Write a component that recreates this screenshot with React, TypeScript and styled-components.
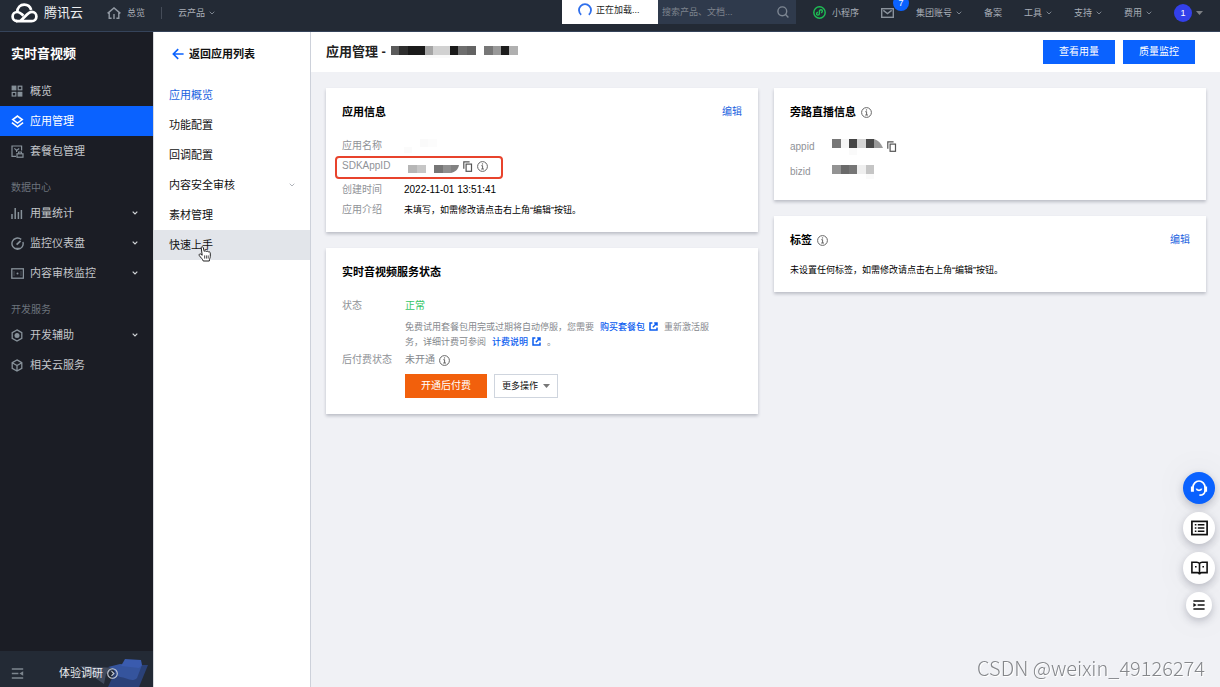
import React from "react";
import styled, { createGlobalStyle } from "styled-components";

const GlobalStyle = createGlobalStyle`
  *, *::before, *::after { box-sizing: border-box; }
  body {
    margin: 0;
    background: #f0f1f5;
    color: #000;
    font-family: "Liberation Sans", "Noto Sans CJK SC", sans-serif;
    font-size: 10px;
    line-height: 20px;
  }
  a { color: inherit; text-decoration: none; }
  button, input { font: inherit; margin: 0; border: 0; border-radius: 0; }
  button { cursor: pointer; }
  svg { display: block; flex: none; }
  h1, h2, p, ul, dl, dd, dt { margin: 0; padding: 0; }
`;

/* ---------- layout ---------- */

const Page = styled.div`
  display: flex;
  flex-direction: column;
  min-height: 100vh;
`;

const Body = styled.div`
  display: flex;
  flex: 1;
`;

/* ---------- top bar ---------- */

const TopBar = styled.header`
  display: flex;
  align-items: flex-start;
  height: 32px;
  padding: 0 17px 0 11px;
  background: #232a35;
  border-bottom: 1px solid #35435a;
  color: #a9afb8;
  font-size: 9px;
`;

const TopGroup = styled.nav<{ $gap: number }>`
  display: flex;
  align-items: center;
  gap: ${(p) => p.$gap}px;
  height: 25px;
  white-space: nowrap;
`;

const Brand = styled.a`
  display: flex;
  align-items: center;
  gap: 6px;
  margin-right: 8px;
  color: #eceef0;
  font-size: 13px;
`;

const TopLink = styled.a<{ $gap?: number }>`
  position: relative;
  display: flex;
  align-items: center;
  gap: ${(p) => p.$gap ?? 4}px;
`;

const Divider = styled.span`
  width: 1px;
  height: 12px;
  background: #454c58;
`;

const Badge = styled.span`
  position: absolute;
  left: 12px;
  top: -13px;
  width: 16px;
  height: 16px;
  border-radius: 8px;
  background: #0a62ff;
  color: #fff;
  line-height: 16px;
  text-align: center;
`;

const Avatar = styled.span`
  width: 18px;
  height: 18px;
  border-radius: 9px;
  background: #3340ea;
  color: #fff;
  line-height: 18px;
  text-align: center;
`;

const Loading = styled.div`
  display: flex;
  align-items: center;
  gap: 4px;
  width: 96px;
  height: 24px;
  margin-left: auto;
  padding: 0 0 4px 16px;
  background: #fff;
  color: #222;
`;

const Search = styled.label`
  display: flex;
  align-items: center;
  width: 138px;
  height: 24px;
  margin-right: 17px;
  padding: 0 7px 0 4px;
  background: #2f3a4c;
`;

const SearchInput = styled.input`
  flex: 1;
  min-width: 0;
  padding: 0;
  background: none;
  color: #d0d4da;
  outline: none;
  &::placeholder { color: #7d838c; opacity: 1; }
`;

/* ---------- product side bar ---------- */

const SideBar = styled.aside`
  display: flex;
  flex: none;
  flex-direction: column;
  width: 153px;
  background: #1b1d25;
  color: #c3c6ca;
`;

const SideTitle = styled.h2`
  padding: 12px 11px;
  color: #fff;
  font-size: 13px;
  line-height: 20px;
`;

const SideLabel = styled.p`
  padding: 12px 11px 0;
  color: #6c737c;
`;

const SideLink = styled.a<{ $active?: boolean }>`
  display: flex;
  align-items: center;
  gap: 6px;
  height: 30px;
  padding: 0 15px 0 11px;
  background: ${(p) => (p.$active ? "#0a62ff" : "transparent")};
  color: ${(p) => (p.$active ? "#fff" : "inherit")};
  font-size: 11px;
`;

const Grow = styled.span`
  flex: 1;
`;

const SideFooter = styled.footer`
  position: relative;
  display: flex;
  align-items: center;
  gap: 35px;
  height: 36px;
  margin-top: auto;
  padding: 8px 11px 0;
  background: #232a35;
  overflow: hidden;
`;

const Survey = styled.a`
  position: relative;
  display: flex;
  align-items: center;
  gap: 4px;
  color: #e8eaed;
  font-size: 11px;
`;

const SurveyArt = styled.svg`
  position: absolute;
  right: 3px;
  bottom: 0;
`;

/* ---------- application menu ---------- */

const AppMenu = styled.nav`
  flex: none;
  width: 158px;
  background: #fff;
  border-left: 1px solid #d8dade;
  border-right: 1px solid #cdd1da;
  font-size: 11px;
`;

const BackLink = styled.a`
  display: flex;
  align-items: center;
  gap: 5px;
  padding: 12px 18px 16px;
  color: #111;
  font-weight: 700;
`;

const AppMenuLink = styled.a<{ $state?: "active" | "hover" }>`
  position: relative;
  display: flex;
  align-items: center;
  justify-content: space-between;
  height: 30px;
  padding: 0 15px;
  background: ${(p) => (p.$state === "hover" ? "#e2e5ea" : "transparent")};
  color: ${(p) => (p.$state === "active" ? "#1a62e0" : "#111")};
`;

const Pointer = styled.svg`
  position: absolute;
  left: 44px;
  top: 16px;
`;

/* ---------- main ---------- */

const Main = styled.main`
  flex: 1;
  min-width: 0;
`;

const PageHead = styled.div`
  display: flex;
  align-items: center;
  gap: 8px;
  height: 40px;
  padding: 0 25px 0 15px;
  background: #fff;
`;

const PageTitle = styled.h1`
  display: flex;
  align-items: center;
  gap: 5px;
  margin-right: auto;
  font-size: 13px;
  font-weight: 700;
  color: #222;
`;

const Button = styled.button<{ $kind: "primary" | "warn" | "plain" }>`
  display: flex;
  align-items: center;
  justify-content: center;
  gap: 5px;
  height: 24px;
  padding: 0 ${(p) => (p.$kind === "plain" ? 7 : 16)}px;
  border: ${(p) => (p.$kind === "plain" ? "1px solid #cfd5de" : "0")};
  background: ${(p) =>
    ({ primary: "#0a62ff", warn: "#f2600c", plain: "#fff" })[p.$kind]};
  color: ${(p) => (p.$kind === "plain" ? "#111" : "#fff")};
  font-size: ${(p) => (p.$kind === "plain" ? 9 : 10)}px;
  white-space: nowrap;
`;

const Columns = styled.div`
  display: grid;
  grid-template-columns: 1fr 1fr;
  align-items: start;
  gap: 16px;
  padding: 16px 14px 16px 15px;
`;

const Stack = styled.div`
  display: flex;
  flex-direction: column;
  gap: 16px;
`;

const Card = styled.section<{ $bottom: number }>`
  padding: 16px 16px ${(p) => p.$bottom}px;
  background: #fff;
  box-shadow: 0 2px 3px rgba(54, 58, 80, 0.28);
`;

const CardHead = styled.div<{ $gap: number }>`
  display: flex;
  align-items: center;
  gap: 5px;
  height: 16px;
  margin-bottom: ${(p) => p.$gap}px;
`;

const CardTitle = styled.h2`
  font-size: 11px;
  font-weight: 700;
`;

const EditLink = styled.a`
  margin-left: auto;
  color: #1a62e0;
`;

const Row = styled.div<{ $label: number; $height?: number; $after?: number }>`
  position: relative;
  display: grid;
  grid-template-columns: ${(p) => p.$label}px 1fr;
  align-items: center;
  min-height: ${(p) => p.$height ?? 20}px;
  margin-bottom: ${(p) => p.$after ?? 0}px;
`;

const Term = styled.dt`
  color: #8f9297;
`;

const Value = styled.dd<{ $tone?: "ok" | "muted" }>`
  display: flex;
  align-items: center;
  gap: 4px;
  color: ${(p) =>
    p.$tone === "ok" ? "#35c566" : p.$tone === "muted" ? "#85888d" : "#000"};
`;

const Sentence = styled.span`
  font-size: 9px;
`;

const Note = styled.dd`
  grid-column: 2;
  padding-right: 20px;
  color: #85888d;
  font-size: 9px;
  line-height: 15px;
`;

const NoteLink = styled.a`
  margin: 0 6px;
  color: #0a5cf0;
  font-weight: 500;
  svg {
    display: inline-block;
    margin-left: 4px;
    vertical-align: -1px;
  }
`;

const Highlight = styled.span`
  position: absolute;
  top: 0;
  bottom: -3px;
  left: -7px;
  width: 168px;
  border: 2px solid #e8432c;
  border-radius: 4px;
`;

const Actions = styled.div`
  display: flex;
  gap: 7px;
  margin: 4px 0 0 63px;
`;

/* ---------- floating tools ---------- */

const FloatTools = styled.div`
  position: fixed;
  right: 5px;
  bottom: 69px;
  display: flex;
  flex-direction: column;
  align-items: center;
  gap: 8px;
`;

const RoundButton = styled.button<{ $size: number; $primary?: boolean }>`
  display: flex;
  align-items: center;
  justify-content: center;
  width: ${(p) => p.$size}px;
  height: ${(p) => p.$size}px;
  padding: 0;
  border-radius: 50%;
  background: ${(p) => (p.$primary ? "#0a62ff" : "#fff")};
  box-shadow: 0 3px 8px rgba(54, 58, 80, 0.28), 0 0 36px rgba(54, 58, 80, 0.07);
`;

const Watermark = styled.p`
  position: fixed;
  right: 15px;
  bottom: 7px;
  color: #85878b;
  font-family: "Noto Sans CJK SC", sans-serif;
  font-size: 20px;
  font-weight: 300;
  line-height: 24px;
  text-shadow: 1px 1px 0 #fff;
`;

/* ---------- icons ---------- */

const stroke = (color: string, width = 1) => ({
  fill: "none",
  stroke: color,
  strokeWidth: width,
});

const CloudLogo = () => (
  <svg width="27" height="20" viewBox="0 0 27 20" {...stroke("#fff", 2.7)}>
    <path d="M5 18.1H20.5C23.6 18.1 25.4 16 25.4 13.4C25.4 10.8 23.4 8.9 20.9 8.9C18.9 8.9 17.6 9.9 16.3 11.2L9.4 18" />
    <path d="M6.3 18.1C3.5 18.1 1.6 16.1 1.6 13.5C1.6 10.9 3.7 9 6.2 9C8.2 9 9.6 10.1 10.9 11.3L12.4 12.8" />
    <path d="M6.2 9C6.4 4.6 9.3 1.6 13.2 1.6C16.7 1.6 19.2 3.7 20.2 7" />
  </svg>
);

const HomeIcon = () => (
  <svg width="14" height="12" viewBox="0 0 14 12" {...stroke("#9299a3", 1.4)}>
    <path d="M0.6 6.4L7 0.9L13.4 6.4M2.2 5V11.3H4.6M11.8 5V11.3H9.4M7 7V11.9" />
  </svg>
);

const Chevron = ({ color = "#7b838e", width = 1 }: { color?: string; width?: number }) => (
  <svg width="6" height="4" viewBox="0 0 6 4" {...stroke(color, width)}>
    <path d="M0.7 0.7L3 3L5.3 0.7" />
  </svg>
);

const Caret = ({ color = "#777" }: { color?: string }) => (
  <svg width="7" height="4" viewBox="0 0 7 4" fill={color}>
    <path d="M0 0H7L3.5 4Z" />
  </svg>
);

const Spinner = () => (
  <svg width="14" height="14" viewBox="0 0 14 14" {...stroke("#2f6fec", 1.8)}>
    <path d="M3.2 11.8A6 6 0 1 1 10.8 11.8" />
  </svg>
);

const SearchIcon = () => (
  <svg width="12" height="12" viewBox="0 0 12 12" {...stroke("#7e8793", 1.4)}>
    <circle cx="5.3" cy="5.3" r="4.4" />
    <path d="M8.6 8.6L11.4 11.4" />
  </svg>
);

const MiniProgramIcon = () => (
  <svg width="13" height="13" viewBox="0 0 13 13" {...stroke("#1fbf55", 1.4)}>
    <circle cx="6.5" cy="6.5" r="5.7" />
    <path d="M4.9 6.2C3.2 6.4 3.1 9.1 4.8 9.1C6 9.1 6.4 8.3 6.4 7.4V5.4C6.4 4.4 7 3.8 8 3.8C9.8 3.8 9.8 6.4 8.1 6.7" />
  </svg>
);

const MailIcon = () => (
  <svg width="13" height="10" viewBox="0 0 13 10" {...stroke("#8a929c", 1.4)}>
    <rect x="0.7" y="0.7" width="11.6" height="8.6" />
    <path d="M2.3 2.4L6.5 5.6L10.7 2.4" />
  </svg>
);

const ICON = "#87919a";

const GridIcon = () => (
  <svg width="13" height="13" viewBox="0 0 13 13" {...stroke(ICON, 1.2)}>
    <rect x="1.2" y="1.2" width="3.6" height="3.6" fill={ICON} />
    <rect x="7.2" y="1.2" width="3.6" height="3.6" />
    <rect x="1.2" y="7.4" width="3.6" height="3.6" />
    <rect x="7.2" y="7.4" width="3.6" height="3.6" fill={ICON} />
  </svg>
);

const LayersIcon = () => (
  <svg width="13" height="13" viewBox="0 0 13 13" {...stroke("#fff", 1.6)}>
    <path d="M6.5 1.1L11.2 4.6L6.5 8.1L1.8 4.6Z" />
    <path d="M0.9 7.6L6.5 11.8L12.1 7.6" />
  </svg>
);

const PackageIcon = () => (
  <svg width="13" height="13" viewBox="0 0 13 13" {...stroke(ICON, 1.2)}>
    <path d="M5 11.4H1V1H10.6V5.6M3.4 3.4L5.6 5.4L8.2 3.4M5.6 5.4V7" />
    <rect x="6" y="8.8" width="6" height="3.4" />
    <path d="M7.6 8.8V7H10.4V8.8" />
  </svg>
);

const BarsIcon = () => (
  <svg width="13" height="13" viewBox="0 0 13 13" {...stroke(ICON, 1.5)}>
    <path d="M1 7V12M4.2 1V12M7.4 5V12M10.4 3V12" />
  </svg>
);

const GaugeIcon = () => (
  <svg width="13" height="13" viewBox="0 0 13 13" {...stroke(ICON, 1.4)}>
    <path d="M10.2 2.4A5.6 5.6 0 1 0 11.9 5M4 11.4H9" />
    <path d="M5.6 7.6L9.6 3.8" strokeWidth="1.8" />
  </svg>
);

const MonitorIcon = () => (
  <svg width="13" height="13" viewBox="0 0 13 13" {...stroke(ICON, 1.3)}>
    <rect x="0.8" y="1.8" width="11.6" height="9.4" />
    <path d="M3 4V9M10 4V9" strokeWidth="0.4" />
    <circle cx="6.5" cy="6.5" r="1" fill={ICON} stroke="none" />
  </svg>
);

const HexIcon = () => (
  <svg width="13" height="13" viewBox="0 0 13 13" {...stroke(ICON, 1.3)}>
    <path d="M6 0.9L10.8 3.6V9.4L6 12.1L1.2 9.4V3.6Z" />
    <circle cx="6" cy="6.5" r="2.5" fill={ICON} stroke="none" />
  </svg>
);

const CubeIcon = () => (
  <svg width="13" height="13" viewBox="0 0 13 13" {...stroke(ICON, 1.3)}>
    <path d="M6 0.9L10.8 3.6V9.4L6 12.1L1.2 9.4V3.6ZM1.2 3.8L6 6.6L10.8 3.8M6 6.6V12" />
  </svg>
);

const CollapseIcon = () => (
  <svg width="13" height="11" viewBox="0 0 13 11" {...stroke("#7d868f", 1.3)}>
    <path d="M0.8 1H12.2M0.8 5.5H7.4M0.8 10H12.2" />
    <path d="M12.2 3.2V7.8L8.4 5.5Z" fill="#7d868f" stroke="none" />
  </svg>
);

const CircleArrow = () => (
  <svg width="11" height="11" viewBox="0 0 11 11" {...stroke("#c9ced6", 1.1)}>
    <circle cx="5.5" cy="5.5" r="4.8" />
    <path d="M4.5 3.2L6.9 5.5L4.5 7.8" />
  </svg>
);

const BackIcon = () => (
  <svg width="12" height="12" viewBox="0 0 12 12" {...stroke("#0a62ff", 1.6)}>
    <path d="M11.6 6H1.4M6.2 1.1L1.3 6L6.2 10.9" />
  </svg>
);

const CopyIcon = () => (
  <svg width="10" height="11" viewBox="0 0 10 11" {...stroke("#555", 1.2)}>
    <rect x="3.1" y="3.1" width="5.4" height="7.2" />
    <path d="M0.8 7.8V0.8H6.6" />
  </svg>
);

const InfoIcon = () => (
  <svg width="11" height="11" viewBox="0 0 11 11" {...stroke("#666", 1)}>
    <circle cx="5.5" cy="5.5" r="4.9" />
    <path d="M5.6 4.6V8M4.3 4.7H5.6M4.2 8H7" />
    <circle cx="5.5" cy="2.9" r="0.7" fill="#666" stroke="none" />
  </svg>
);

const ExternalIcon = () => (
  <svg width="9" height="9" viewBox="0 0 9 9" {...stroke("#0a5cf0", 1.5)}>
    <path d="M3.4 1H1V8H8V5.6M5.2 1H8V3.8M7.8 1.2L3.8 5.2" />
  </svg>
);

const HeadsetIcon = () => (
  <svg width="18" height="18" viewBox="0 0 18 18" {...stroke("#fff", 1.7)}>
    <path d="M3 8.4A6 6.4 0 0 1 15 8.4M15 12C14.8 14.6 12.8 16.2 9.4 16.2" />
    <path d="M2.4 7.6V12.8M15.6 7.6V12.8" strokeWidth="3" />
    <path d="M6.4 9.6C7 12 11 12 11.6 9.6" />
  </svg>
);

const ListIcon = () => (
  <svg width="17" height="16" viewBox="0 0 17 16" {...stroke("#111", 1.7)}>
    <rect x="0.9" y="1.4" width="15.2" height="13.2" />
    <path d="M3.8 4.8H5.4M6.8 4.8H13.4M3.8 8H5.4M6.8 8H13.4M3.8 11.2H5.4M6.8 11.2H13.4" strokeWidth="1.4" />
  </svg>
);

const BookIcon = () => (
  <svg width="17" height="14" viewBox="0 0 17 14" {...stroke("#111", 1.6)}>
    <path d="M8.5 2.6C7.8 1.6 7 1.3 5.8 1.3H0.9V11.6H6.4C7.6 11.6 8.2 12 8.5 13.2C8.8 12 9.4 11.6 10.6 11.6H16.1V1.3H11.2C10 1.3 9.2 1.6 8.5 2.6ZM8.5 2.6V13" />
    <path d="M4 5.8H5.6M11.4 5.8H13" />
  </svg>
);

const ExpandIcon = () => (
  <svg width="12" height="10" viewBox="0 0 12 10" {...stroke("#111", 1.3)}>
    <path d="M0.4 1H11.6M4.6 5H11.6M0.4 9H11.6" />
    <path d="M0.4 2.9V7.1L3.6 5Z" fill="#111" stroke="none" />
  </svg>
);

const ClipboardArt = () => (
  <SurveyArt width="70" height="30" viewBox="0 0 70 30" aria-hidden="true">
    <path d="M0 9L36 11L26 17L24 27L8 16Z" fill="#414b5d" />
    <path d="M38 8L68 8L59 30H28Z" fill="#2a4178" />
    <path d="M28 10L40 7L62 8L57 21C52 26 46 20 40 20C35 18 36 12 28 10Z" fill="#35549d" />
    <path d="M45 2L61 3L62 8L59 11L41 9Z" fill="#3a5bae" />
  </SurveyArt>
);

const HandPointer = () => (
  <Pointer width="14" height="16" viewBox="0 0 14 16" aria-hidden="true">
    <path
      d="M3.2 1.6C3.2 0.4 5 0.4 5.3 1.6L6.2 5.4C6.6 4.6 8 4.7 8.3 5.6C8.9 4.9 10.1 5.1 10.3 6C11.2 5.5 12.3 6 12.3 7.2V10.4C12.3 12 11.4 12.6 11.3 15H5.2C4.9 13.2 2.6 11.6 1.2 9.4C0.7 8.3 2 7.4 3 8.2L4.2 9.3Z"
      fill="#fff"
      stroke="#222"
      strokeWidth="1"
    />
    <path d="M6.6 9.4V12.6M8.4 9.4V12.6M10.2 9.4V12.6" {...stroke("#222", 0.8)} />
  </Pointer>
);

/* Pixelated blocks that hide private values. */
type Cell = [x: number, y: number, w: number, h: number, fill: string];

const Mosaic = ({ width, height, cells, tail }: { width: number; height: number; cells: Cell[]; tail?: React.ReactNode }) => (
  <svg width={width} height={height} viewBox={`0 0 ${width} ${height}`} shapeRendering="crispEdges" aria-hidden="true">
    {cells.map(([x, y, w, h, fill]) => (
      <rect key={`${x}-${y}`} x={x} y={y} width={w} height={h} fill={fill} />
    ))}
    {tail}
  </svg>
);

const titleCells: Cell[] = [
  [0, 0, 8, 9, "#5b5b5b"], [8, 0, 9, 9, "#2e2e2e"], [17, 0, 17, 9, "#1a1a1a"],
  [34, 0, 8, 9, "#a5a5a5"], [42, 0, 17, 9, "#d1d1d1"], [59, 0, 8, 9, "#1a1a1a"],
  [67, 0, 9, 9, "#6e6e6e"], [76, 0, 9, 9, "#636363"], [93, 0, 9, 9, "#777"],
  [102, 0, 8, 9, "#999"], [110, 0, 8, 9, "#1c1c1c"], [118, 0, 9, 9, "#b0b0b0"],
  [34, 9, 25, 3, "#fafafa"],
];
const nameCells: Cell[] = [
  [0, 8, 8, 6, "#fbfbfb"], [16, 0, 8, 8, "#fafafa"], [24, 0, 9, 8, "#fcfcfc"],
];
const sdkCells: Cell[] = [
  [0, 6, 9, 8, "#b6b6b6"], [9, 6, 9, 8, "#c6c6c6"], [26, 6, 9, 8, "#767676"], [35, 6, 8, 8, "#8f8f8f"],
];
const appidCells: Cell[] = [
  [0, 0, 9, 9, "#777"], [9, 0, 8, 9, "#f5f5f5"], [17, 0, 8, 9, "#444"],
  [25, 0, 9, 9, "#d4d4d4"], [34, 0, 8, 9, "#484848"], [17, 9, 8, 7, "#fafafa"],
];
const bizidCells: Cell[] = [
  [0, 0, 9, 9, "#939393"], [9, 0, 8, 9, "#6a6a6a"], [17, 0, 8, 9, "#767676"],
  [25, 0, 9, 9, "#efefef"], [34, 0, 8, 9, "#c5c5c5"], [34, 9, 8, 5, "#fafafa"],
];

/* ---------- data ---------- */

type SideEntry = { text: string; icon: React.ReactNode; active?: boolean; fold?: boolean };

const sideGroups: { label?: string; items: SideEntry[] }[] = [
  {
    items: [
      { text: "概览", icon: <GridIcon /> },
      { text: "应用管理", icon: <LayersIcon />, active: true },
      { text: "套餐包管理", icon: <PackageIcon /> },
    ],
  },
  {
    label: "数据中心",
    items: [
      { text: "用量统计", icon: <BarsIcon />, fold: true },
      { text: "监控仪表盘", icon: <GaugeIcon />, fold: true },
      { text: "内容审核监控", icon: <MonitorIcon />, fold: true },
    ],
  },
  {
    label: "开发服务",
    items: [
      { text: "开发辅助", icon: <HexIcon />, fold: true },
      { text: "相关云服务", icon: <CubeIcon /> },
    ],
  },
];

const appMenu: { text: string; state?: "active" | "hover"; fold?: boolean }[] = [
  { text: "应用概览", state: "active" },
  { text: "功能配置" },
  { text: "回调配置" },
  { text: "内容安全审核", fold: true },
  { text: "素材管理" },
  { text: "快速上手", state: "hover" },
];

const topMenu = [
  { text: "集团账号", fold: true },
  { text: "备案", fold: false },
  { text: "工具", fold: true },
  { text: "支持", fold: true },
  { text: "费用", fold: true },
];

/* ---------- page ---------- */

export default function App() {
  return (
    <Page>
      <GlobalStyle />
      <TopBar>
        <TopGroup $gap={16}>
          <Brand href="#home">
            <CloudLogo />
            腾讯云
          </Brand>
          <TopLink href="#overview" $gap={6}>
            <HomeIcon />
            总览
          </TopLink>
          <Divider />
          <TopLink href="#products" $gap={4}>
            云产品
            <Chevron />
          </TopLink>
        </TopGroup>
        <Loading role="status">
          <Spinner />
          正在加载...
        </Loading>
        <Search>
          <SearchInput type="text" placeholder="搜索产品、文档..." aria-label="搜索产品、文档" />
          <SearchIcon />
        </Search>
        <TopGroup $gap={22}>
          <TopLink href="#mini" $gap={6}>
            <MiniProgramIcon />
            小程序
          </TopLink>
          <TopLink href="#mail" aria-label="消息">
            <MailIcon />
            <Badge>7</Badge>
          </TopLink>
          {topMenu.map((m) => (
            <TopLink key={m.text} href="#menu">
              {m.text}
              {m.fold && <Chevron />}
            </TopLink>
          ))}
          <TopLink href="#account">
            <Avatar>1</Avatar>
            <Caret color="#7d8085" />
          </TopLink>
        </TopGroup>
      </TopBar>

      <Body>
        <SideBar>
          <SideTitle>实时音视频</SideTitle>
          {sideGroups.map((g, i) => (
            <div key={i}>
              {g.label && <SideLabel>{g.label}</SideLabel>}
              {g.items.map((it) => (
                <SideLink key={it.text} href="#section" $active={it.active}>
                  {it.icon}
                  {it.text}
                  <Grow />
                  {it.fold && <Chevron color="#d0d3d6" width={1.2} />}
                </SideLink>
              ))}
            </div>
          ))}
          <SideFooter>
            <ClipboardArt />
            <CollapseIcon />
            <Survey href="#survey">
              体验调研
              <CircleArrow />
            </Survey>
          </SideFooter>
        </SideBar>

        <AppMenu>
          <BackLink href="#apps">
            <BackIcon />
            返回应用列表
          </BackLink>
          {appMenu.map((it) => (
            <AppMenuLink key={it.text} href="#page" $state={it.state}>
              {it.text}
              {it.fold && <Chevron color="#b0b4ba" />}
              {it.state === "hover" && <HandPointer />}
            </AppMenuLink>
          ))}
        </AppMenu>

        <Main>
          <PageHead>
            <PageTitle>
              应用管理 -
              <Mosaic width={130} height={12} cells={titleCells} />
            </PageTitle>
            <Button $kind="primary">查看用量</Button>
            <Button $kind="primary">质量监控</Button>
          </PageHead>

          <Columns>
            <Stack>
              <Card $bottom={12}>
                <CardHead $gap={16}>
                  <CardTitle>应用信息</CardTitle>
                  <EditLink href="#edit-app">编辑</EditLink>
                </CardHead>
                <dl>
                  <Row $label={62}>
                    <Term>应用名称</Term>
                    <Value>
                      <Mosaic width={40} height={14} cells={nameCells} />
                    </Value>
                  </Row>
                  <Row $label={66} $after={4}>
                    <Term>SDKAppID</Term>
                    <Value>
                      <Mosaic
                        width={51}
                        height={14}
                        cells={sdkCells}
                        tail={<path d="M43 6H51C50 11 47 13 43 14Z" fill="#828282" shapeRendering="auto" />}
                      />
                      <CopyIcon />
                      <InfoIcon />
                    </Value>
                    <Highlight />
                  </Row>
                  <Row $label={62}>
                    <Term>创建时间</Term>
                    <Value>2022-11-01 13:51:41</Value>
                  </Row>
                  <Row $label={62}>
                    <Term>应用介绍</Term>
                    <Value>
                      <Sentence>未填写，如需修改请点击右上角“编辑”按钮。</Sentence>
                    </Value>
                  </Row>
                </dl>
              </Card>

              <Card $bottom={16}>
                <CardHead $gap={16}>
                  <CardTitle>实时音视频服务状态</CardTitle>
                </CardHead>
                <dl>
                  <Row $label={63} $after={4}>
                    <Term>状态</Term>
                    <Value $tone="ok">正常</Value>
                  </Row>
                  <Row $label={63}>
                    <Note>
                      免费试用套餐包用完或过期将自动停服，您需要
                      <NoteLink href="#buy">
                        购买套餐包
                        <ExternalIcon />
                      </NoteLink>
                      重新激活服务，详细计费可参阅
                      <NoteLink href="#pricing">
                        计费说明
                        <ExternalIcon />
                      </NoteLink>
                      。
                    </Note>
                  </Row>
                  <Row $label={63}>
                    <Term>后付费状态</Term>
                    <Value $tone="muted">
                      未开通
                      <InfoIcon />
                    </Value>
                  </Row>
                </dl>
                <Actions>
                  <Button $kind="warn">开通后付费</Button>
                  <Button $kind="plain" aria-haspopup="menu">
                    更多操作
                    <Caret />
                  </Button>
                </Actions>
              </Card>
            </Stack>

            <Stack>
              <Card $bottom={16}>
                <CardHead $gap={14}>
                  <CardTitle>旁路直播信息</CardTitle>
                  <InfoIcon />
                </CardHead>
                <dl>
                  <Row $label={42} $height={25}>
                    <Term>appid</Term>
                    <Value>
                      <Mosaic
                        width={51}
                        height={16}
                        cells={appidCells}
                        tail={<path d="M42 0C46 1 49 4 51 9H42Z" fill="#999" shapeRendering="auto" />}
                      />
                      <CopyIcon />
                    </Value>
                  </Row>
                  <Row $label={42} $height={25}>
                    <Term>bizid</Term>
                    <Value>
                      <Mosaic width={51} height={14} cells={bizidCells} />
                    </Value>
                  </Row>
                </dl>
              </Card>

              <Card $bottom={12}>
                <CardHead $gap={12}>
                  <CardTitle>标签</CardTitle>
                  <InfoIcon />
                  <EditLink href="#edit-tags">编辑</EditLink>
                </CardHead>
                <p>
                  <Sentence>未设置任何标签，如需修改请点击右上角“编辑”按钮。</Sentence>
                </p>
              </Card>
            </Stack>
          </Columns>
        </Main>
      </Body>

      <FloatTools>
        <RoundButton $size={32} $primary aria-label="客服">
          <HeadsetIcon />
        </RoundButton>
        <RoundButton $size={32} aria-label="清单">
          <ListIcon />
        </RoundButton>
        <RoundButton $size={32} aria-label="文档">
          <BookIcon />
        </RoundButton>
        <RoundButton $size={26} aria-label="收起">
          <ExpandIcon />
        </RoundButton>
      </FloatTools>
      <Watermark>CSDN @weixin_49126274</Watermark>
    </Page>
  );
}
